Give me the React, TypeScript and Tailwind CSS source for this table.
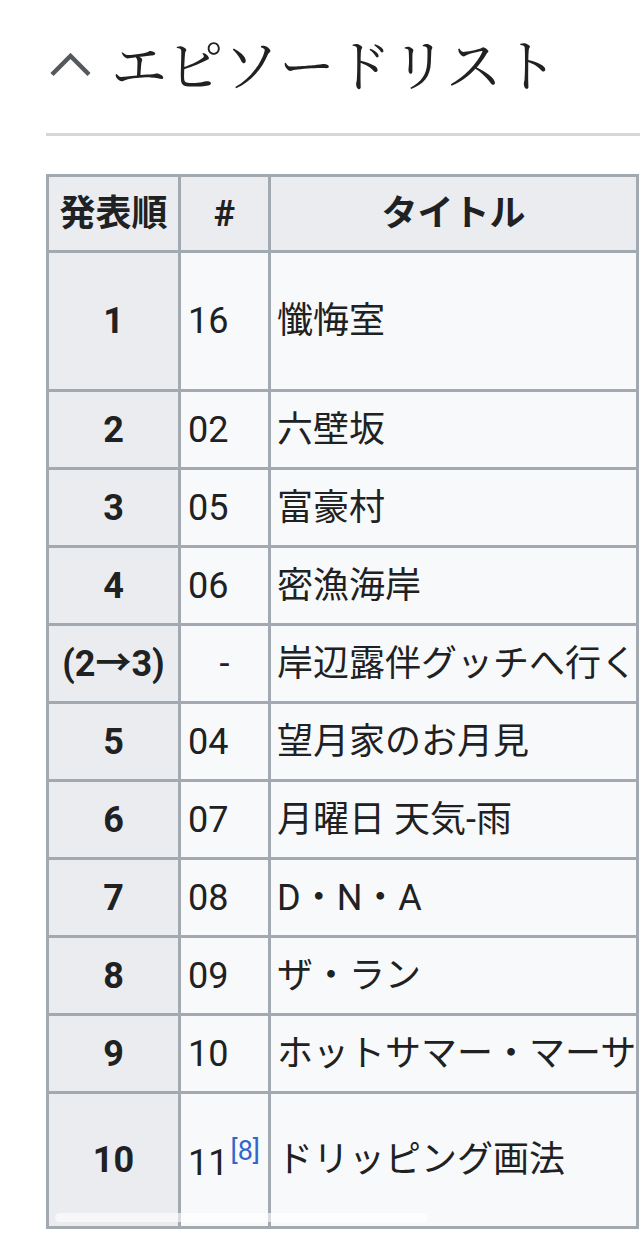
import React from "react";

type Row = {
  order: string;
  num: string;
  title: string;
  ref?: string;
  h: string;
  center?: boolean;
};

const rows: Row[] = [
  { order: "1", num: "16", title: "懺悔室", h: "h-[136px]" },
  { order: "2", num: "02", title: "六壁坂", h: "h-[75px]" },
  { order: "3", num: "05", title: "富豪村", h: "h-[75px]" },
  { order: "4", num: "06", title: "密漁海岸", h: "h-[75px]" },
  { order: "(2→3)", num: "-", title: "岸辺露伴グッチへ行く", h: "h-[75px]", center: true },
  { order: "5", num: "04", title: "望月家のお月見", h: "h-[75px]" },
  { order: "6", num: "07", title: "月曜日 天気-雨", h: "h-[75px]" },
  { order: "7", num: "08", title: "D・N・A", h: "h-[75px]" },
  { order: "8", num: "09", title: "ザ・ラン", h: "h-[75px]" },
  { order: "9", num: "10", title: "ホットサマー・マーサ", h: "h-[75px]" },
  { order: "10", num: "11", title: "ドリッピング画法", ref: "[8]", h: "h-[132px]" },
];

const font = "font-['Roboto','Noto_Sans_CJK_JP',sans-serif]";

export default function App() {
  return (
    <div className={`min-h-[1255px] bg-white pl-[46px] text-[#202122] ${font}`}>
      {/* section heading */}
      <div className="flex items-start pt-[34px]">
        <svg
          width="43"
          height="24"
          viewBox="0 0 43 24"
          className="ml-[3px] mt-[19px] shrink-0"
        >
          <polyline
            points="3,21.5 21.5,3 40,21.5"
            fill="none"
            stroke="#54595d"
            strokeWidth="4.5"
          />
        </svg>
        <h2 className="ml-[19px] whitespace-nowrap text-[56px] leading-[56px] font-normal font-['Noto_Serif_CJK_JP','Noto_Sans_CJK_JP',serif]">
          エピソードリスト
        </h2>
      </div>
      <div className="mt-[43px] h-[3px] bg-[#d4d6db]" />

      {/* episode table */}
      <div className="relative mt-[38px] w-[593px]">
        <div className="grid grid-cols-[129px_87px_365px] gap-[3px] bg-[#a2a9b1] p-[3px] text-[36px]">
          <div className="flex h-[73px] items-center justify-center bg-[#eaecf0] font-bold">発表順</div>
          <div className="flex h-[73px] items-center justify-center bg-[#eaecf0] font-bold">#</div>
          <div className="flex h-[73px] items-center justify-center bg-[#eaecf0] font-bold">タイトル</div>

          {rows.map((r) => (
            <React.Fragment key={r.order}>
              <div className={`flex ${r.h} items-center justify-center bg-[#eaecf0] font-bold`}>
                {r.order}
              </div>
              <div
                className={`flex ${r.h} items-center bg-[#f8f9fa] ${
                  r.center ? "justify-center" : "pl-[7px]"
                }`}
              >
                <span className="whitespace-nowrap leading-none">
                  {r.num}
                  {r.ref && (
                    <sup className="relative top-[-2px] ml-[2px] align-super text-[27px] leading-none text-[#3366cc]">
                      {r.ref}
                    </sup>
                  )}
                </span>
              </div>
              <div className={`flex ${r.h} items-center whitespace-nowrap bg-[#f8f9fa] pl-[6px]`}>
                {r.title}
              </div>
            </React.Fragment>
          ))}
        </div>
        {/* overlay scrollbar */}
        <div className="absolute bottom-[7px] left-[9px] h-[9px] w-[373px] rounded-full bg-white/60" />
      </div>
    </div>
  );
}
